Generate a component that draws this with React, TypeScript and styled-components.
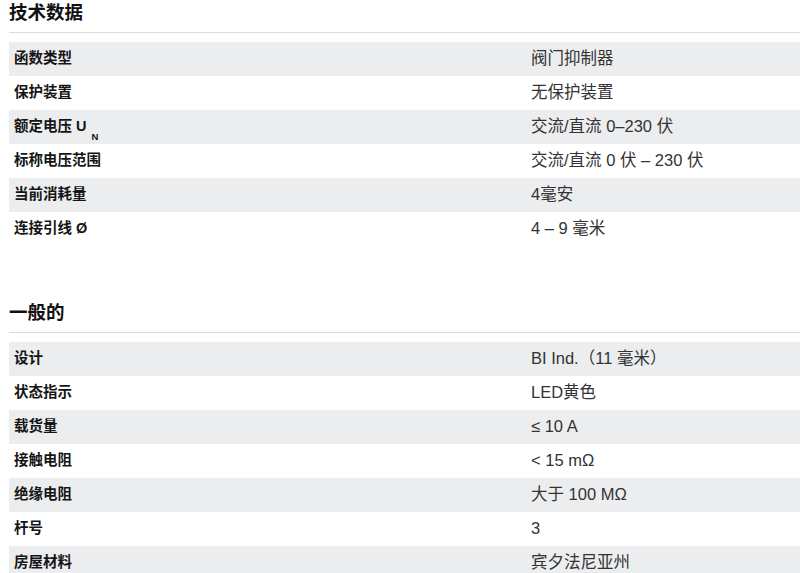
import React from "react";
import styled, { createGlobalStyle } from "styled-components";

type Spec = { label: React.ReactNode; value: string };

const GlobalStyle = createGlobalStyle`
  body {
    margin: 0;
    background: #fff;
    font-family: "Liberation Sans", "Noto Sans CJK SC", sans-serif;
    color: #222;
  }
`;

const Page = styled.div`
  width: 791px;
  margin-left: 9px;
  display: flex;
  flex-direction: column;
  gap: 54px;
`;

const Section = styled.section`
  display: flex;
  flex-direction: column;
`;

const Heading = styled.h2`
  margin: 0;
  font-size: 18.5px;
  line-height: 26px;
  font-weight: bold;
  color: #111;
  padding-bottom: 6px;
  border-bottom: 1px solid #dcdcdc;
`;

const Table = styled.div`
  margin-top: 9px;
  display: flex;
  flex-direction: column;
`;

const Row = styled.div<{ $striped: boolean }>`
  display: grid;
  grid-template-columns: 517px 1fr;
  align-items: center;
  height: 34px;
  padding-left: 5px;
  background: ${(p) => (p.$striped ? "#ecedef" : "#fff")};
`;

const Label = styled.div`
  font-size: 14.5px;
  line-height: 20px;
  font-weight: bold;
  color: #151515;
  margin-top: -2px;
`;

const Value = styled.div`
  font-size: 16.5px;
  line-height: 20px;
  color: #333;
  margin-top: -2px;
`;

/* subscript sits well below the baseline in the source page */
const Sub = styled.sub`
  font-size: 9.5px;
  line-height: 0;
  margin-left: 5px;
  vertical-align: baseline;
  position: relative;
  top: 9px;
`;

const technical: Spec[] = [
  { label: "函数类型", value: "阀门抑制器" },
  { label: "保护装置", value: "无保护装置" },
  {
    label: (
      <>
        额定电压 U<Sub>N</Sub>
      </>
    ),
    value: "交流/直流 0–230 伏",
  },
  { label: "标称电压范围", value: "交流/直流 0 伏 – 230 伏" },
  { label: "当前消耗量", value: "4毫安" },
  { label: "连接引线 Ø", value: "4 – 9 毫米" },
];

const general: Spec[] = [
  { label: "设计", value: "BI Ind.（11 毫米）" },
  { label: "状态指示", value: "LED黄色" },
  { label: "载货量", value: "≤ 10 A" },
  { label: "接触电阻", value: "< 15 mΩ" },
  { label: "绝缘电阻", value: "大于 100 MΩ" },
  { label: "杆号", value: "3" },
  { label: "房屋材料", value: "宾夕法尼亚州" },
];

function SpecSection({ title, rows }: { title: string; rows: Spec[] }) {
  return (
    <Section>
      <Heading>{title}</Heading>
      <Table>
        {rows.map((row, i) => (
          <Row key={i} $striped={i % 2 === 0}>
            <Label>{row.label}</Label>
            <Value>{row.value}</Value>
          </Row>
        ))}
      </Table>
    </Section>
  );
}

export default function App() {
  return (
    <>
      <GlobalStyle />
      <Page>
        <SpecSection title="技术数据" rows={technical} />
        <SpecSection title="一般的" rows={general} />
      </Page>
    </>
  );
}
